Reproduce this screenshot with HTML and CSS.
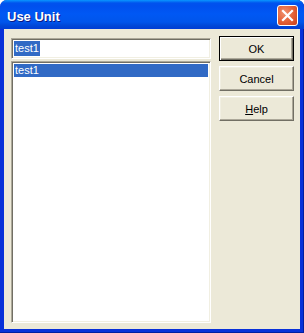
FILE: index.html
```html
<!DOCTYPE html>
<html lang="en">
<head>
  <meta charset="UTF-8">
  <title>Use Unit</title>
  <link rel="stylesheet" href="styles.css">
</head>
<body>

  <div class="window">
    <!-- Barra de titulo -->
    <div class="titlebar">
      <span class="title">Use Unit</span>
      <div class="close">
        <svg width="13" height="13" viewBox="0 0 13 13">
          <path d="M2 2 L11 11 M11 2 L2 11" stroke="#fff" stroke-width="2.2" stroke-linecap="square"/>
        </svg>
      </div>
    </div>

    <div class="client">
      <div class="coluna">
        <div class="campo"><span class="sel">test1</span></div>
        <div class="lista">
          <div class="item ativo">test1</div>
        </div>
      </div>
      <div class="botoes">
        <button class="padrao">OK</button>
        <button>Cancel</button>
        <button><u>H</u>elp</button>
      </div>
    </div>
  </div>

</body>
</html>
```

FILE: styles.css
```css
body {
  margin: 0;
  background: #fff;
  font-family: 'Liberation Sans', Arial, sans-serif;
}

.window {
  width: 304px;
  height: 333px;
  display: flex;
  flex-direction: column;
  background: #0831d9;
  border-radius: 7px 7px 0 0;
  box-shadow: inset 0 -1px 0 #001ea0, inset -1px 0 0 #001ea0;
}

/* Barra de titulo azul do XP */
.titlebar {
  height: 29px;
  display: flex;
  align-items: center;
  justify-content: space-between;
  padding: 0 5px 0 7px;
  border-radius: 7px 7px 0 0;
  background: linear-gradient(#0997ff 0, #0053ee 3px, #0050ee 6px, #0058f4 14px, #0055eb 22px, #0046d5 26px, #003dd7 29px);
}

.title {
  color: #fff;
  font-weight: bold;
  font-size: 13px;
  text-shadow: 1px 1px 0 #0a1883;
  margin-top: 4px;
}

.close {
  width: 21px;
  height: 21px;
  box-sizing: border-box;
  border: 1px solid #fff;
  border-radius: 3px;
  background: radial-gradient(circle at 35% 35%, #f0926f 0, #e35e34 55%, #c8401c 100%);
  display: flex;
  align-items: center;
  justify-content: center;
  margin-top: 2px;
  margin-right: 1px;
}

.client {
  flex: 1;
  margin: 0 4px 4px;
  background: #ece9d8;
  display: flex;
  gap: 8px;
  padding: 9px 6px 6px 7px;
}

.coluna {
  width: 201px;
  display: flex;
  flex-direction: column;
  gap: 2px;
}

/* Borda afundada estilo classico */
.campo, .lista {
  background: #fff;
  border-style: solid;
  border-width: 1px;
  border-color: #aca899 #fff #fff #aca899;
  box-shadow: inset 1px 1px 0 #716f64, inset -1px -1px 0 #f1efe2;
}

.campo {
  height: 21px;
  box-sizing: border-box;
  padding: 2px 2px 0 2px;
  font-size: 11px;
}

.sel {
  display: inline-block;
  background: #316ac5;
  color: #fff;
  line-height: 15px;
  padding: 0 1px;
}

.lista {
  flex: 1;
  padding: 2px;
}

.item {
  font-size: 11px;
  line-height: 13px;
  padding-left: 1px;
}

.item.ativo {
  background: #316ac5;
  color: #fff;
}

.botoes {
  display: flex;
  flex-direction: column;
  gap: 5px;
  margin-top: -2px;
}

button {
  width: 75px;
  height: 25px;
  font-family: 'Liberation Sans', Arial, sans-serif;
  font-size: 11px;
  color: #000;
  background: #ece9d8;
  border-style: solid;
  border-width: 1px;
  border-color: #fff #716f64 #716f64 #fff;
  box-shadow: inset -1px -1px 0 #aca899, inset 1px 1px 0 #f1efe2;
  padding: 0;
}

button.padrao {
  border: 1px solid #000;
  box-shadow: inset 1px 1px 0 #fff, inset -1px -1px 0 #716f64, inset -2px -2px 0 #aca899;
}
```
